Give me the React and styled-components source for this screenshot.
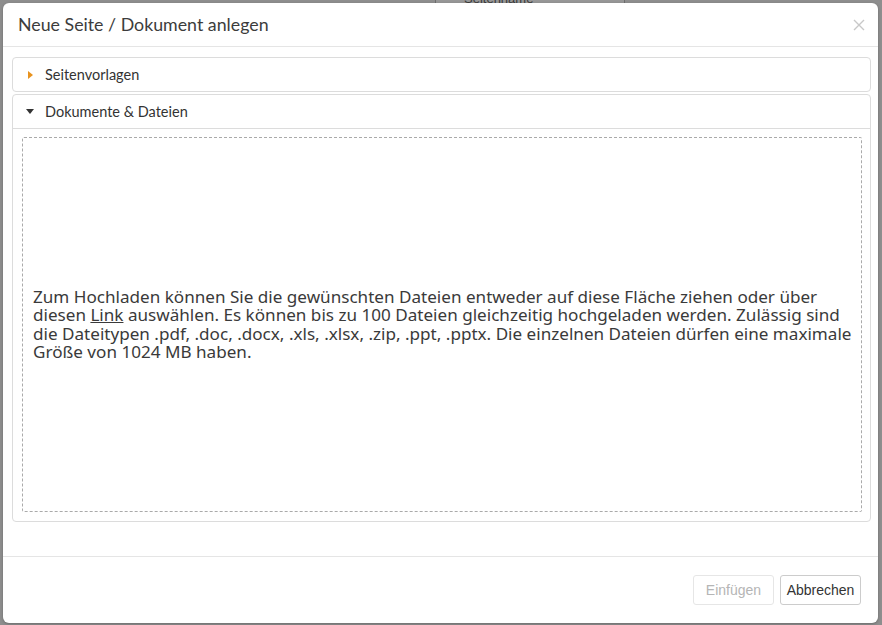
import React from "react";
import styled, { createGlobalStyle } from "styled-components";

const Global = createGlobalStyle`
  html, body { margin: 0; padding: 0; }
  body {
    width: 882px; height: 625px; overflow: hidden;
    background: #8e8e8e;
    font-family: "Lato", sans-serif;
  }
`;

const Backdrop = styled.div`
  position: relative;
  width: 882px;
  height: 625px;
  background: #8e8e8e;
`;

const BgHeader = styled.div`
  display: flex;
  height: 3px;
  margin-left: 435px;
  width: 188px;
  border-left: 1px solid #6e6e6e;
  border-right: 1px solid #6e6e6e;
  background: #979797;
  overflow: hidden;
  font: 13px "Liberation Sans", Arial, sans-serif;
  color: #3a3a3a;
  span { margin: -9px 0 0 28px; }
`;

const Modal = styled.div`
  position: absolute;
  left: 3px;
  top: 3px;
  width: 875px;
  height: 620px;
  background: #fff;
  border-radius: 6px;
  display: flex;
  flex-direction: column;
  box-shadow: 0 1px 3px rgba(0,0,0,0.25);
`;

const Header = styled.div`
  height: 43px;
  display: flex;
  align-items: center;
  justify-content: space-between;
  padding: 0 11px 0 15px;
  border-bottom: 1px solid #e5e5e5;
`;

const Title = styled.h4`
  margin: 0 0 1px;
  font-family: "Lato", sans-serif;
  font-weight: 400;
  font-size: 17.8px;
  color: #3c3c3c;
`;

const Close = styled.button`
  border: 0;
  background: none;
  padding: 0;
  width: 16px;
  height: 16px;
  display: flex;
  align-items: center;
  justify-content: center;
  svg { display: block; }
`;

const Body = styled.div`
  padding: 10px 7px 0 9px;
  display: flex;
  flex-direction: column;
  gap: 2px;
  flex: 1;
`;

const Panel = styled.div`
  border: 1px solid #dcdcdc;
  border-radius: 4px;
  display: flex;
  flex-direction: column;
  ${p => p.$grow ? "height: 426px;" : ""}
`;

const PanelHead = styled.div`
  height: 33px;
  flex: none;
  display: flex;
  align-items: center;
  padding-left: 12px;
  gap: 10px;
  font-family: "Lato", sans-serif;
  font-size: 14.5px;
  color: #333;
  ${p => p.$open ? "border-bottom: 1px solid #dcdcdc;" : ""}
`;

const Caret = styled.span`
  width: 10px;
  display: flex;
  justify-content: center;
`;

const PanelBody = styled.div`
  flex: 1;
  padding: 8px 8px 9px 9px;
  display: flex;
`;

const Drop = styled.div`
  flex: 1;
  border: 1px dashed #aaa;
  border-radius: 2px;
  display: flex;
  align-items: center;
  padding: 0 10px;
  font-family: "Noto Sans", "Open Sans", sans-serif;
  font-size: 17.1px;
  line-height: 18.5px;
  color: #3a3a3a;
  p { margin: 0; white-space: nowrap; }
  a { color: #3a3a3a; text-decoration: underline; }
`;

const Footer = styled.div`
  height: 66px;
  border-top: 1px solid #e5e5e5;
  display: flex;
  align-items: center;
  justify-content: flex-end;
  gap: 6px;
  padding: 0 17px 0 0;
`;

const Btn = styled.button`
  height: 30px;
  width: 81px;
  background: #fff;
  border: 1px solid ${p => p.disabled ? "#e6e6e6" : "#ccc"};
  border-radius: 3px;
  font-family: "Liberation Sans", Arial, sans-serif;
  font-size: 14px;
  color: ${p => p.disabled ? "#b5b5b5" : "#333"};
  padding: 0;
`;

export default function App() {
  return (
    <>
      <Global />
      <Backdrop>
        <BgHeader><span>Seitenname</span></BgHeader>
        <Modal>
          <Header>
            <Title>Neue Seite / Dokument anlegen</Title>
            <Close aria-label="Schließen">
              <svg width="12" height="12" viewBox="0 0 12 12">
                <path d="M1 1L11 11M11 1L1 11" stroke="#c8c8c8" strokeWidth="1.4" />
              </svg>
            </Close>
          </Header>
          <Body>
            <Panel>
              <PanelHead>
                <Caret>
                  <svg width="5" height="8" viewBox="0 0 5 8"><path d="M0 0L5 4L0 8Z" fill="#e8931f" /></svg>
                </Caret>
                Seitenvorlagen
              </PanelHead>
            </Panel>
            <Panel $grow>
              <PanelHead $open>
                <Caret>
                  <svg width="8" height="5" viewBox="0 0 8 5"><path d="M0 0L8 0L4 5Z" fill="#333" /></svg>
                </Caret>
                Dokumente &amp; Dateien
              </PanelHead>
              <PanelBody>
                <Drop>
                  <p>
                    Zum Hochladen können Sie die gewünschten Dateien entweder auf diese Fläche ziehen oder über<br />
                    diesen <a href="#">Link</a> auswählen. Es können bis zu 100 Dateien gleichzeitig hochgeladen werden. Zulässig sind<br />
                    die Dateitypen .pdf, .doc, .docx, .xls, .xlsx, .zip, .ppt, .pptx. Die einzelnen Dateien dürfen eine maximale<br />
                    Größe von 1024 MB haben.
                  </p>
                </Drop>
              </PanelBody>
            </Panel>
          </Body>
          <Footer>
            <Btn disabled>Einfügen</Btn>
            <Btn>Abbrechen</Btn>
          </Footer>
        </Modal>
      </Backdrop>
    </>
  );
}
